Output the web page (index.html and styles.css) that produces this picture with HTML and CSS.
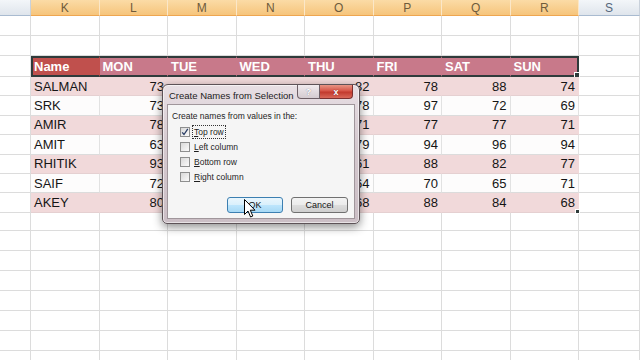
FILE: index.html
```html
<!DOCTYPE html>
<html lang="en">
<head>
  <meta charset="utf-8">
  <link rel="stylesheet" href="styles.css">
</head>
<body>
  <div class="sheet">
    <div class="row heads">
      <div class="h"></div>
      <div class="h sel">K</div>
      <div class="h sel">L</div>
      <div class="h sel">M</div>
      <div class="h sel">N</div>
      <div class="h sel">O</div>
      <div class="h sel">P</div>
      <div class="h sel">Q</div>
      <div class="h sel">R</div>
      <div class="h">S</div>
    </div>

    <div class="row"><div class="c"></div><div class="c"></div><div class="c"></div><div class="c"></div><div class="c"></div><div class="c"></div><div class="c"></div><div class="c"></div><div class="c"></div><div class="c"></div></div>
    <div class="row"><div class="c"></div><div class="c"></div><div class="c"></div><div class="c"></div><div class="c"></div><div class="c"></div><div class="c"></div><div class="c"></div><div class="c"></div><div class="c"></div></div>

    <!-- table header -->
    <div class="row thead">
      <div class="c"></div>
      <div class="c t name first">Name</div>
      <div class="c t">MON</div>
      <div class="c t">TUE</div>
      <div class="c t">WED</div>
      <div class="c t">THU</div>
      <div class="c t">FRI</div>
      <div class="c t">SAT</div>
      <div class="c t last">SUN<span class="handle"></span></div>
      <div class="c"></div>
    </div>

    <!-- data (TUE / WED sit under the dialog) -->
    <div class="row data pink">
      <div class="c"></div>
      <div class="c t txt">SALMAN</div>
      <div class="c t num">73</div><div class="c t num"></div><div class="c t num"></div><div class="c t num">82</div>
      <div class="c t num">78</div><div class="c t num">88</div><div class="c t num">74</div>
      <div class="c"></div>
    </div>
    <div class="row data">
      <div class="c"></div>
      <div class="c t txt">SRK</div>
      <div class="c t num">73</div><div class="c t num"></div><div class="c t num"></div><div class="c t num">78</div>
      <div class="c t num">97</div><div class="c t num">72</div><div class="c t num">69</div>
      <div class="c"></div>
    </div>
    <div class="row data pink">
      <div class="c"></div>
      <div class="c t txt">AMIR</div>
      <div class="c t num">78</div><div class="c t num"></div><div class="c t num"></div><div class="c t num">71</div>
      <div class="c t num">77</div><div class="c t num">77</div><div class="c t num">71</div>
      <div class="c"></div>
    </div>
    <div class="row data">
      <div class="c"></div>
      <div class="c t txt">AMIT</div>
      <div class="c t num">63</div><div class="c t num"></div><div class="c t num"></div><div class="c t num">79</div>
      <div class="c t num">94</div><div class="c t num">96</div><div class="c t num">94</div>
      <div class="c"></div>
    </div>
    <div class="row data pink">
      <div class="c"></div>
      <div class="c t txt">RHITIK</div>
      <div class="c t num">93</div><div class="c t num"></div><div class="c t num"></div><div class="c t num">61</div>
      <div class="c t num">88</div><div class="c t num">82</div><div class="c t num">77</div>
      <div class="c"></div>
    </div>
    <div class="row data">
      <div class="c"></div>
      <div class="c t txt">SAIF</div>
      <div class="c t num">72</div><div class="c t num"></div><div class="c t num"></div><div class="c t num">64</div>
      <div class="c t num">70</div><div class="c t num">65</div><div class="c t num">71</div>
      <div class="c"></div>
    </div>
    <div class="row data pink">
      <div class="c"></div>
      <div class="c t txt">AKEY</div>
      <div class="c t num">80</div><div class="c t num"></div><div class="c t num"></div><div class="c t num">68</div>
      <div class="c t num">88</div><div class="c t num">84</div><div class="c t num">68<span class="handle"></span></div>
      <div class="c"></div>
    </div>

    <div class="row first-empty"><div class="c"></div><div class="c"></div><div class="c"></div><div class="c"></div><div class="c"></div><div class="c"></div><div class="c"></div><div class="c"></div><div class="c"></div><div class="c"></div></div>
    <div class="row"><div class="c"></div><div class="c"></div><div class="c"></div><div class="c"></div><div class="c"></div><div class="c"></div><div class="c"></div><div class="c"></div><div class="c"></div><div class="c"></div></div>
    <div class="row"><div class="c"></div><div class="c"></div><div class="c"></div><div class="c"></div><div class="c"></div><div class="c"></div><div class="c"></div><div class="c"></div><div class="c"></div><div class="c"></div></div>
    <div class="row"><div class="c"></div><div class="c"></div><div class="c"></div><div class="c"></div><div class="c"></div><div class="c"></div><div class="c"></div><div class="c"></div><div class="c"></div><div class="c"></div></div>
    <div class="row"><div class="c"></div><div class="c"></div><div class="c"></div><div class="c"></div><div class="c"></div><div class="c"></div><div class="c"></div><div class="c"></div><div class="c"></div><div class="c"></div></div>
    <div class="row"><div class="c"></div><div class="c"></div><div class="c"></div><div class="c"></div><div class="c"></div><div class="c"></div><div class="c"></div><div class="c"></div><div class="c"></div><div class="c"></div></div>
    <div class="row"><div class="c"></div><div class="c"></div><div class="c"></div><div class="c"></div><div class="c"></div><div class="c"></div><div class="c"></div><div class="c"></div><div class="c"></div><div class="c"></div></div>
    <div class="row"><div class="c"></div><div class="c"></div><div class="c"></div><div class="c"></div><div class="c"></div><div class="c"></div><div class="c"></div><div class="c"></div><div class="c"></div><div class="c"></div></div>
  </div>

  <!-- Create Names dialog -->
  <div class="dialog">
    <div class="titlebar">
      <span class="title">Create Names from Selection</span>
      <div class="caption">
        <span class="cap help">?</span>
        <span class="cap close">x</span>
      </div>
    </div>
    <div class="panel">
      <p class="lead">Create names from values in the:</p>
      <div class="opts">
        <div class="opt">
          <span class="box">
            <svg width="8" height="8" viewBox="0 0 8 8"><path d="M1.2 4.3 L3 6.5 L6.8 0.8" fill="none" stroke="#2b3f66" stroke-width="1.3"/></svg>
          </span>
          <span class="lbl focus"><u>T</u>op row</span>
        </div>
        <div class="opt"><span class="box"></span><span class="lbl"><u>L</u>eft column</span></div>
        <div class="opt"><span class="box"></span><span class="lbl"><u>B</u>ottom row</span></div>
        <div class="opt"><span class="box"></span><span class="lbl"><u>R</u>ight column</span></div>
      </div>
      <div class="buttons">
        <button class="btn ok">OK</button>
        <button class="btn">Cancel</button>
      </div>
    </div>
  </div>

  <svg class="cursor" width="12" height="19" viewBox="0 0 12 19">
    <path d="M0.5 0.5 L0.5 15.5 L4 12 L6.6 18 L8.8 17 L6.3 11.2 L11 11.2 Z" fill="#fff" stroke="#000" stroke-width="1"/>
  </svg>
</body>
</html>
```

FILE: styles.css
```css
body {
  margin: 0;
  width: 640px;
  height: 360px;
  overflow: hidden;
  position: relative;
  background: #fff;
  font-family: "Liberation Sans", Arial, sans-serif;
}

.row {
  display: grid;
  grid-template-columns: 31px repeat(8, 68.5px) 1fr;
  height: 20px;
}

.c {
  display: flex;
  align-items: center;
  min-width: 0;
  overflow: hidden;
  white-space: nowrap;
  border-right: 1px solid #dcdcdc;
  border-bottom: 1px solid #dcdcdc;
  font-size: 13px;
  color: #151515;
}

/* column letters */
.heads {
  height: 16px;
}

.h {
  display: flex;
  align-items: center;
  justify-content: center;
  font-size: 12px;
  color: #56677c;
  background: linear-gradient(#f3f6f9, #dfe5ec);
  border-right: 1px solid #c9d1db;
  border-bottom: 1px solid #a9bbd0;
}

.h.sel {
  color: #6e5b3b;
  background: linear-gradient(#fbdba6, #f6c57c);
  border-right-color: #fbe7c8;
  border-bottom-color: #eea650;
}

/* table header */
.thead {
  height: 21px;
}

.thead .t {
  position: relative;
  overflow: visible;
  padding-left: 3px;
  background: #c8798a;
  color: #fff;
  font-weight: bold;
  border-top: 2px solid #2f3b3b;
  border-bottom: 2px solid #2f3b3b;
  border-right-color: #c8798a;
}

.thead .name {
  background: #c0504d;
  border-right-color: #c0504d;
  padding-left: 1px;
}

.thead .first {
  border-left: 2px solid #2f3b3b;
}

.thead .last {
  border-right: 2px solid #2f3b3b;
}

.handle {
  position: absolute;
  right: -3px;
  bottom: -3px;
  width: 4px;
  height: 4px;
  background: #2f3b3b;
  border: 1px solid #fff;
}

/* data rows */
.data {
  height: 19.4px;
}

.data .t {
  background: #fdfcfc;
  border-right-color: #e2e2e2;
}

.pink .t {
  background: #f1d9da;
  border-right-color: #f1d9da;
  border-bottom-color: #e5d0d1;
}

.txt {
  padding-left: 3px;
}

.num {
  position: relative;
  overflow: visible;
  justify-content: flex-end;
  padding-right: 3px;
}

.num .handle {
  right: -2px;
  bottom: -2px;
  width: 3px;
  height: 3px;
}

.first-empty {
  height: 18.5px;
}

/* dialog */
.dialog {
  position: absolute;
  left: 162px;
  top: 84px;
  width: 198px;
  height: 140px;
  box-sizing: border-box;
  padding: 0 4px 4px;
  display: flex;
  flex-direction: column;
  border: 1px solid #5d5257;
  border-radius: 6px 6px 5px 5px;
  background: linear-gradient(#e8dfe4 0%, #d5c9cf 45%, #cbbec5 100%);
  box-shadow: 0 3px 10px rgba(0, 0, 0, 0.45), inset 0 0 0 1px rgba(255, 255, 255, 0.55);
}

.titlebar {
  height: 19px;
  flex-shrink: 0;
  display: flex;
}

.title {
  align-self: center;
  padding: 1px 0 0 2px;
  font-size: 9.5px;
  color: #1c1c1c;
}

.caption {
  margin-left: auto;
  margin-right: 2px;
  display: flex;
  height: 14px;
}

.cap {
  display: flex;
  align-items: center;
  justify-content: center;
  box-sizing: border-box;
  border: 1px solid #6d5f66;
  border-top: 0;
  font-size: 9px;
  font-weight: bold;
  color: #fff;
}

.help {
  width: 23px;
  border-radius: 0 0 0 4px;
  background: linear-gradient(#f0eaee, #d4cbd0);
  text-shadow: 0 0 1px #6a6a7a;
}

.close {
  width: 33px;
  border-left: 0;
  border-radius: 0 0 4px 0;
  background: linear-gradient(#e79585 0%, #d65548 45%, #c23a2e 55%, #d9685a 100%);
  border-color: #7c2f2f;
  text-shadow: 0 0 1px #601818;
}

.panel {
  flex: 1;
  display: flex;
  flex-direction: column;
  padding: 6px 0 0 4px;
  background: #f5f5f5;
  border: 1px solid #a0969b;
  font-size: 8.5px;
  color: #1e1e1e;
}

.lead {
  margin: 0;
  line-height: 11px;
}

.opts {
  margin: 2px 0 0 8px;
}

.opt {
  display: flex;
  align-items: center;
  height: 15px;
}

.box {
  width: 10px;
  height: 10px;
  box-sizing: border-box;
  display: flex;
  align-items: center;
  justify-content: center;
  border: 1px solid #8e8f8f;
  background: linear-gradient(135deg, #d9d9d9, #fbfbfb);
}

.lbl {
  margin-left: 2px;
  padding: 1px 1px;
  border: 1px solid transparent;
}

.lbl.focus {
  border: 1px dotted #333;
}

.buttons {
  margin-top: auto;
  margin-bottom: 5px;
  padding-right: 6px;
  display: flex;
  justify-content: flex-end;
  gap: 8px;
}

.btn {
  width: 57px;
  height: 16px;
  padding: 0;
  font: 9px "Liberation Sans", Arial, sans-serif;
  color: #151515;
  border: 1px solid #707070;
  border-radius: 3px;
  background: linear-gradient(#f3f3f3 0%, #ebebeb 50%, #dddddd 50%, #cfcfcf 100%);
}

.btn.ok {
  width: 56px;
  border-color: #3c7fb1;
  background: linear-gradient(#eaf6fd 0%, #d9f0fc 50%, #bee6fd 50%, #a7d9f5 100%);
}

.cursor {
  position: absolute;
  left: 244px;
  top: 199px;
}
```
